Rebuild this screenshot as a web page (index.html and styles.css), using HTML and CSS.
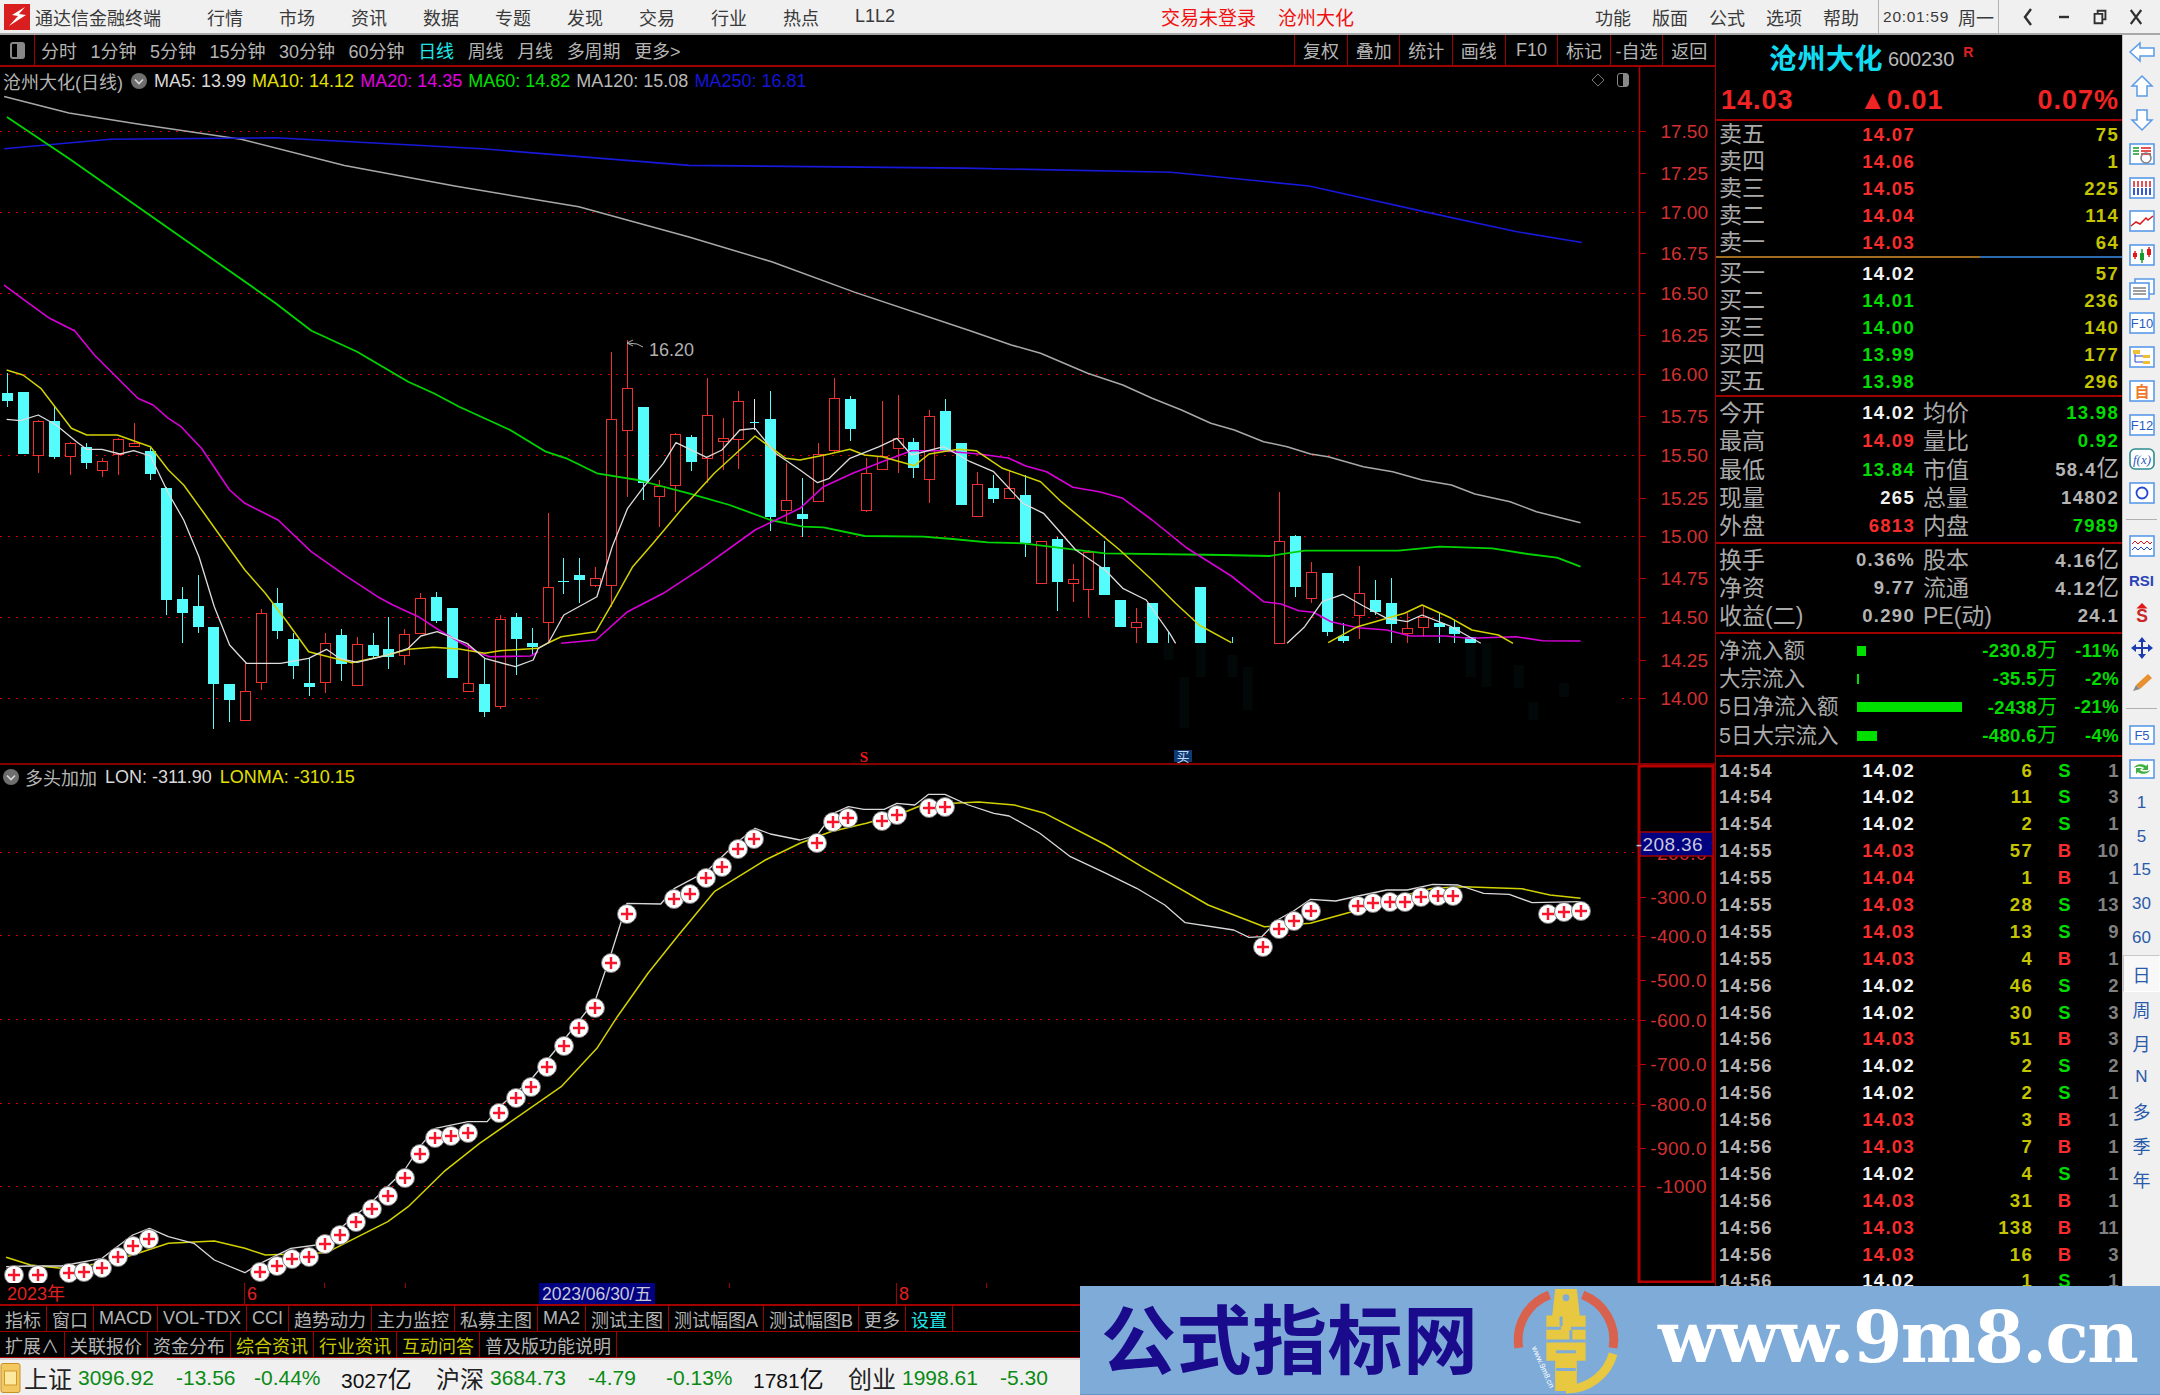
FILE: index.html
```html
<!DOCTYPE html>
<html lang="zh-CN">
<head>
<meta charset="utf-8">
<title>通达信金融终端</title>
<link rel="stylesheet" href="styles.css">
</head>
<body>
<div class="app">
  <header class="titlebar">
    <div class="brand">
      <svg class="brand-logo" viewBox="0 0 26 26"><rect width="26" height="26" class="logo-bg"/><path class="logo-mark" d="M21 3 8 11l6 1-9 10 17-11-7-1z"/></svg>
      <span class="brand-name">通达信金融终端</span>
    </div>
    <nav class="menu">
      <span>行情</span><span>市场</span><span>资讯</span><span>数据</span><span>专题</span><span>发现</span><span>交易</span><span>行业</span><span>热点</span><span>L1L2</span>
    </nav>
    <div class="notice"><span>交易未登录</span><span>沧州大化</span></div>
    <nav class="menu menu-right"><span>功能</span><span>版面</span><span>公式</span><span>选项</span><span>帮助</span></nav>
    <div class="clock"><span class="clock-time">20:01:59</span><span>周一</span></div>
    <div class="winctl">
      <svg viewBox="0 0 14 20"><path class="ctl" d="M10 2 4 10l6 8"/></svg>
      <svg viewBox="0 0 14 20"><path class="ctl" d="M2 10h10"/></svg>
      <svg viewBox="0 0 18 20"><path class="ctl" d="M6 6V2h10v11h-4M2 6h10v12H2z"/></svg>
      <svg viewBox="0 0 16 20"><path class="ctl" d="m2 2 12 16M14 2 2 18"/></svg>
    </div>
  </header>

  <div class="workspace">
    <main class="left">
      <div class="toolbar">
        <div class="tool-toggle"><span class="toggle-box"></span></div>
        <div class="periods">
          <span>分时</span><span>1分钟</span><span>5分钟</span><span>15分钟</span><span>30分钟</span><span>60分钟</span><span class="cyan">日线</span><span>周线</span><span>月线</span><span>多周期</span><span>更多&gt;</span>
        </div>
        <div class="tool-btns">
          <span>复权</span><span>叠加</span><span>统计</span><span>画线</span><span>F10</span><span>标记</span><span>-自选</span><span>返回</span>
        </div>
      </div>

      <section class="plot plot-main">
        <svg id="main-plot" class="plot-svg" viewBox="0 67 1715 698"></svg>
        <div class="plot-info">
          <span>沧州大化(日线)</span>
          <svg class="drop" viewBox="0 0 16 16"><circle cx="8" cy="8" r="8"/><path d="m4 6.5 4 4 4-4"/></svg>
          <span class="white">MA5: 13.99</span>
          <span class="yellow">MA10: 14.12</span>
          <span class="magenta">MA20: 14.35</span>
          <span class="green">MA60: 14.82</span>
          <span class="silver">MA120: 15.08</span>
          <span class="blue">MA250: 16.81</span>
        </div>
        <div class="plot-corner">
          <svg viewBox="0 0 14 14"><path class="ctl-thin" d="M7 1l6 6-6 6-6-6z"/></svg>
          <span class="toggle-box small"></span>
        </div>
      </section>

      <section class="plot plot-sub">
        <svg id="sub-plot" class="plot-svg" viewBox="0 765 1715 518"></svg>
        <div class="plot-info sub-info">
          <svg class="drop" viewBox="0 0 16 16"><circle cx="8" cy="8" r="8"/><path d="m4 6.5 4 4 4-4"/></svg>
          <span>多头加加</span>
          <span class="white">LON: -311.90</span>
          <span class="yellow">LONMA: -310.15</span>
        </div>
      </section>

      <div class="timeaxis">
        <span class="t-year">2023年</span>
        <span class="t-mark t-six">6</span>
        <span class="t-date">2023/06/30/五</span>
        <span class="t-mark t-eight">8</span>
      </div>

      <div class="tabs">
        <span>指标</span><span>窗口</span><span>MACD</span><span>VOL-TDX</span><span>CCI</span><span>趋势动力</span><span>主力监控</span><span>私募主图</span><span>MA2</span><span>测试主图</span><span>测试幅图A</span><span>测试幅图B</span><span>更多</span><span class="cyan">设置</span>
      </div>
      <div class="tabs tabs-low">
        <span>扩展∧</span><span>关联报价</span><span>资金分布</span><span class="olive">综合资讯</span><span class="olive">行业资讯</span><span class="olive">互动问答</span><span>普及版功能说明</span>
      </div>
    </main>

    <aside class="panel">
      <div class="stock-name"><b>沧州大化</b><span class="code">600230</span><sup>R</sup></div>
      <div class="stock-price"><span>14.03</span><span>▲0.01</span><span>0.07%</span></div>

      <div class="book">
        <div class="b-row"><i>卖五</i><b class="r">14.07</b><b class="y">75</b></div>
        <div class="b-row"><i>卖四</i><b class="r">14.06</b><b class="y">1</b></div>
        <div class="b-row"><i>卖三</i><b class="r">14.05</b><b class="y">225</b></div>
        <div class="b-row"><i>卖二</i><b class="r">14.04</b><b class="y">114</b></div>
        <div class="b-row"><i>卖一</i><b class="r">14.03</b><b class="y">64</b></div>
      </div>
      <div class="book-split"></div>
      <div class="book book-buy">
        <div class="b-row"><i>买一</i><b class="w">14.02</b><b class="y">57</b></div>
        <div class="b-row"><i>买二</i><b class="g">14.01</b><b class="y">236</b></div>
        <div class="b-row"><i>买三</i><b class="g">14.00</b><b class="y">140</b></div>
        <div class="b-row"><i>买四</i><b class="g">13.99</b><b class="y">177</b></div>
        <div class="b-row"><i>买五</i><b class="g">13.98</b><b class="y">296</b></div>
      </div>

      <div class="quote">
        <div class="q-row"><i>今开</i><b class="w">14.02</b><i>均价</i><b class="g">13.98</b></div>
        <div class="q-row"><i>最高</i><b class="r">14.09</b><i>量比</i><b class="g">0.92</b></div>
        <div class="q-row"><i>最低</i><b class="g">13.84</b><i>市值</i><b class="a">58.4<em>亿</em></b></div>
        <div class="q-row"><i>现量</i><b class="w">265</b><i>总量</i><b class="a">14802</b></div>
        <div class="q-row"><i>外盘</i><b class="r">6813</b><i>内盘</i><b class="g">7989</b></div>
      </div>
      <div class="quote quote-fin">
        <div class="q-row"><i>换手</i><b class="a">0.36%</b><i>股本</i><b class="a">4.16<em>亿</em></b></div>
        <div class="q-row"><i>净资</i><b class="a">9.77</b><i>流通</i><b class="a">4.12<em>亿</em></b></div>
        <div class="q-row"><i>收益(二)</i><b class="a">0.290</b><i>PE(动)</i><b class="a">24.1</b></div>
      </div>

      <div class="flow">
        <div class="f-row"><i>净流入额</i><span class="bar" style="width:9px"></span><b>-230.8<em>万</em></b><b>-11%</b></div>
        <div class="f-row"><i>大宗流入</i><span class="bar" style="width:2px"></span><b>-35.5<em>万</em></b><b>-2%</b></div>
        <div class="f-row"><i>5日净流入额</i><span class="bar" style="width:105px"></span><b>-2438<em>万</em></b><b>-21%</b></div>
        <div class="f-row"><i>5日大宗流入</i><span class="bar" style="width:20px"></span><b>-480.6<em>万</em></b><b>-4%</b></div>
      </div>

      <div class="ticks">
        <div class="t-row"><b class="a">14:54</b><b class="w">14.02</b><b class="y">6</b><b class="g">S</b><b class="n">1</b></div>
        <div class="t-row"><b class="a">14:54</b><b class="w">14.02</b><b class="y">11</b><b class="g">S</b><b class="n">3</b></div>
        <div class="t-row"><b class="a">14:54</b><b class="w">14.02</b><b class="y">2</b><b class="g">S</b><b class="n">1</b></div>
        <div class="t-row"><b class="a">14:55</b><b class="r">14.03</b><b class="y">57</b><b class="r">B</b><b class="n">10</b></div>
        <div class="t-row"><b class="a">14:55</b><b class="r">14.04</b><b class="y">1</b><b class="r">B</b><b class="n">1</b></div>
        <div class="t-row"><b class="a">14:55</b><b class="r">14.03</b><b class="y">28</b><b class="g">S</b><b class="n">13</b></div>
        <div class="t-row"><b class="a">14:55</b><b class="r">14.03</b><b class="y">13</b><b class="g">S</b><b class="n">9</b></div>
        <div class="t-row"><b class="a">14:55</b><b class="r">14.03</b><b class="y">4</b><b class="r">B</b><b class="n">1</b></div>
        <div class="t-row"><b class="a">14:56</b><b class="w">14.02</b><b class="y">46</b><b class="g">S</b><b class="n">2</b></div>
        <div class="t-row"><b class="a">14:56</b><b class="w">14.02</b><b class="y">30</b><b class="g">S</b><b class="n">3</b></div>
        <div class="t-row"><b class="a">14:56</b><b class="r">14.03</b><b class="y">51</b><b class="r">B</b><b class="n">3</b></div>
        <div class="t-row"><b class="a">14:56</b><b class="w">14.02</b><b class="y">2</b><b class="g">S</b><b class="n">2</b></div>
        <div class="t-row"><b class="a">14:56</b><b class="w">14.02</b><b class="y">2</b><b class="g">S</b><b class="n">1</b></div>
        <div class="t-row"><b class="a">14:56</b><b class="r">14.03</b><b class="y">3</b><b class="r">B</b><b class="n">1</b></div>
        <div class="t-row"><b class="a">14:56</b><b class="r">14.03</b><b class="y">7</b><b class="r">B</b><b class="n">1</b></div>
        <div class="t-row"><b class="a">14:56</b><b class="w">14.02</b><b class="y">4</b><b class="g">S</b><b class="n">1</b></div>
        <div class="t-row"><b class="a">14:56</b><b class="r">14.03</b><b class="y">31</b><b class="r">B</b><b class="n">1</b></div>
        <div class="t-row"><b class="a">14:56</b><b class="r">14.03</b><b class="y">138</b><b class="r">B</b><b class="n">11</b></div>
        <div class="t-row"><b class="a">14:56</b><b class="r">14.03</b><b class="y">16</b><b class="r">B</b><b class="n">3</b></div>
        <div class="t-row"><b class="a">14:56</b><b class="w">14.02</b><b class="y">1</b><b class="g">S</b><b class="n">1</b></div>
      </div>
    </aside>

    <aside class="side">
      <div class="s-item"><svg viewBox="0 0 26 22"><path class="arrow" d="M1 11 11 2v5h14v8H11v5z"/></svg></div>
      <div class="s-item"><svg viewBox="0 0 26 22"><path class="arrow" d="M13 1l10 10h-5v10H8V11H3z"/></svg></div>
      <div class="s-item"><svg viewBox="0 0 26 22"><path class="arrow" d="M8 1h10v10h5L13 21 3 11h5z"/></svg></div>
      <div class="s-item"><svg viewBox="0 0 26 22"><rect class="ib" x="1" y="1" width="24" height="20"/><path class="st-g" d="M4 5h6M4 8h6M4 11h6"/><path class="st-r" d="M12 5h10M12 8h10M12 11h10"/><circle class="st-s" cx="17" cy="15" r="5"/></svg></div>
      <div class="s-item"><svg viewBox="0 0 26 22"><rect class="ib" x="1" y="1" width="24" height="20"/><path class="st-r" d="M5 4v6M9 4v6M13 4v6M17 4v6M21 4v6"/><path class="st-b" d="M5 11v7M9 11v7M13 11v7M17 11v7M21 11v7"/></svg></div>
      <div class="s-item"><svg viewBox="0 0 26 22"><rect class="ib" x="1" y="1" width="24" height="20"/><path class="st-r" d="m2 16 5-4 4 2 6-6 2 2 5-4"/></svg></div>
      <div class="s-item"><svg viewBox="0 0 26 22"><rect class="ib" x="1" y="1" width="24" height="20"/><path class="st-r" d="M6 7v8M20 3v10"/><path class="st-g" d="M13 5v14"/><rect class="fl-r" x="4" y="9" width="4" height="4"/><rect class="fl-g" x="11" y="9" width="4" height="7"/><rect class="fl-r" x="18" y="5" width="4" height="6"/></svg></div>
      <div class="s-item"><svg viewBox="0 0 26 22"><path class="ib" d="M6 1h19v15H6z"/><rect class="ib" x="1" y="5" width="19" height="16"/><path class="st-s" d="M4 10h13M4 13h13M4 16h13"/></svg></div>
      <div class="s-item"><svg viewBox="0 0 26 22"><rect class="ib" x="1" y="1" width="24" height="20"/><text class="ib-text" x="13" y="16">F10</text></svg></div>
      <div class="s-item"><svg viewBox="0 0 26 22"><rect class="ib" x="1" y="1" width="24" height="20"/><rect class="fl-y" x="4" y="4" width="7" height="4"/><rect class="fl-y" x="14" y="9" width="7" height="3"/><rect class="fl-y" x="14" y="15" width="7" height="3"/><path class="st-b-thin" d="M6 8v8h8M6 10h8"/></svg></div>
      <div class="s-item"><svg viewBox="0 0 26 22"><rect class="ib" x="1" y="1" width="24" height="20"/><text class="ib-zi" x="13" y="17">自</text></svg></div>
      <div class="s-item"><svg viewBox="0 0 26 22"><rect class="ib" x="1" y="1" width="24" height="20"/><text class="ib-text" x="13" y="16">F12</text></svg></div>
      <div class="s-item"><svg viewBox="0 0 26 22"><rect class="ib ib-teal" x="1" y="1" width="24" height="20" rx="5"/><text class="ib-fx" x="13" y="16">f(x)</text></svg></div>
      <div class="s-item"><svg viewBox="0 0 26 22"><rect class="ib" x="1" y="1" width="24" height="20"/><circle class="st-b" cx="13" cy="11" r="5.5"/></svg></div>
      <div class="s-sep s-sep-a"></div>
      <div class="s-item"><svg viewBox="0 0 26 22"><rect class="ib" x="1" y="1" width="24" height="20"/><path class="st-r-thin" d="m3 9 3-3 3 3 3-3 3 3 3-3 3 3 2-2"/><path class="st-b-thin" d="m3 15 3-3 3 3 3-3 3 3 3-3 3 3 2-2"/></svg></div>
      <div class="s-item"><span class="rsi">RSI</span></div>
      <div class="s-item"><svg viewBox="0 0 26 26"><path class="fl-r" d="m13 1 6 6H7z"/><text class="ib-dollar" x="13" y="22">S</text></svg></div>
      <div class="s-item"><svg viewBox="0 0 26 24"><path class="fl-b" d="m13 1 4 5h-3v5h5V8l5 4-5 4v-3h-5v5h3l-4 5-4-5h3v-5H7v3l-5-4 5-4v3h5V6H9z"/></svg></div>
      <div class="s-item"><svg viewBox="0 0 26 24"><path class="fl-o" d="M7 15 19 4l4 4-12 11z"/><path class="fl-g2" d="M7 15l4 4-7 2z"/></svg></div>
      <div class="s-sep s-sep-b"></div>
      <div class="s-item"><svg viewBox="0 0 26 22"><rect class="ib" x="1" y="2" width="24" height="18"/><text class="ib-text" x="13" y="16">F5</text></svg></div>
      <div class="s-item"><svg viewBox="0 0 26 22"><rect class="ib" x="1" y="2" width="24" height="18"/><path class="fl-rf" d="M5 10c1-4 9-5 12-2l2-2v6h-6l2-2c-2-2-7-2-10 0zM21 12c-1 4-9 5-12 2l-2 2v-6h6l-2 2c2 2 7 2 10 0z"/></svg></div>
      <div class="s-item s-num">1</div>
      <div class="s-item s-num">5</div>
      <div class="s-item s-num">15</div>
      <div class="s-item s-num">30</div>
      <div class="s-item s-num">60</div>
      <div class="s-item s-day s-on">日</div>
      <div class="s-item s-day">周</div>
      <div class="s-item s-day">月</div>
      <div class="s-item s-num">N</div>
      <div class="s-item s-day">多</div>
      <div class="s-item s-day">季</div>
      <div class="s-item s-day">年</div>
    </aside>
  </div>

  <footer class="status">
    <svg class="st-icon" viewBox="0 0 20 30"><rect class="gold-o" x="0.5" y="0.5" width="19" height="29" rx="2"/><rect class="gold-i" x="4" y="8" width="12" height="14"/></svg>
    <span class="s-name">上证</span><span class="s-val">3096.92</span><span class="s-chg">-13.56</span><span class="s-pct">-0.44%</span><span class="s-amt">3027<em>亿</em></span>
    <span class="s-name">沪深</span><span class="s-val">3684.73</span><span class="s-chg">-4.79</span><span class="s-pct">-0.13%</span><span class="s-amt">1781<em>亿</em></span>
    <span class="s-name">创业</span><span class="s-val">1998.61</span><span class="s-chg">-5.30</span>
  </footer>

  <div class="watermark">
    <span class="wm-cn">公式指标网</span>
    <svg class="wm-logo" viewBox="0 0 110 110">
      <path class="wm-red" d="M7 62A49 49 0 0 1 38 8"/><path class="wm-red" d="M72 8A49 49 0 0 1 103 62"/>
      <path class="wm-yel" d="M103 68A49 49 0 0 1 55 104"/>
      <path class="wm-fig" d="M44 2h22l3 27h6v46h-9v31H44V75h-9V29h6z"/>
      <circle class="wm-hole" cx="55" cy="11" r="3.5"/>
      <path class="wm-gap" d="M35 42h15M60 42h15M35 55h40M45 66h20M45 84h20M50 30v10M60 44v10"/>
      <text class="wm-url" x="20" y="62" transform="rotate(66 20 62)">www.9m8.cn</text>
    </svg>
    <span class="wm-en">www.9m8.cn</span>
  </div>
</div>
<script src="chart.js"></script>
</body>
</html>
```
FILE: styles.css
```css
*{box-sizing:border-box}
html,body{margin:0;padding:0;background:#000}
body{width:2160px;height:1395px;overflow:hidden;font-family:"Liberation Sans","Noto Sans CJK SC",sans-serif}
i,em{font-style:normal}
.app{position:relative;display:flex;flex-direction:column;width:2160px;height:1395px}

/* title bar */
.titlebar{display:flex;align-items:center;height:35px;background:#f0f0f0;border-bottom:2px solid #a8a8a8;color:#3a3a3a;font-size:18px;flex:none}
.brand{display:flex;align-items:center;width:207px;padding-left:4px}
.brand-logo{width:26px;height:26px;margin-right:5px}
.logo-bg{fill:#d81e1e}
.logo-mark{fill:#fff}
.brand-name{white-space:nowrap}
.menu{display:flex;align-items:center;gap:36px;white-space:nowrap}
.menu span{display:flex;align-items:center;height:24px}
.notice{display:flex;gap:22px;margin-left:266px;color:#f01010;font-size:19px;white-space:nowrap}
.menu-right{gap:21px;margin-left:241px}
.clock{display:flex;align-items:center;gap:9px;height:33px;margin-left:19px;padding:0 4px;border-left:1px solid #b4b4b4;border-right:1px solid #b4b4b4;white-space:nowrap}
.clock-time{font-size:15.5px;letter-spacing:.7px}
.winctl{display:flex;align-items:center;gap:22px;margin-left:22px}
.winctl svg{height:20px;width:14px;overflow:visible}
.ctl{fill:none;stroke:#303030;stroke-width:2.4}
.ctl-thin{fill:none;stroke:#777;stroke-width:1}

.workspace{display:flex;flex:none;height:1323px}
.left{display:flex;flex-direction:column;width:1715px;flex:none;color:#b4b4b4;font-size:18px}

/* chart toolbar */
.toolbar{display:flex;align-items:center;height:32px;flex:none;border-bottom:2px solid #a00000}
.tool-toggle{display:flex;align-items:center;justify-content:center;width:35px;height:100%;border-right:1px solid #a00000}
.toggle-box{display:block;width:15px;height:17px;border:2px solid #888;border-radius:3px;background:linear-gradient(90deg,#000 50%,#888 50%)}
.toggle-box.small{width:12px;height:14px;border-width:1px}
.periods{display:flex;gap:13.5px;padding-left:6px;white-space:nowrap}
.cyan{color:#1fe8ea}
.tool-btns{display:flex;margin-left:auto;height:100%;white-space:nowrap}
.tool-btns span{display:flex;align-items:center;justify-content:center;width:52.6px;border-left:1px solid #a00000}

/* plots */
.plot{position:relative;flex:none}
.plot-main{height:698px}
.plot-sub{height:518px}
.plot-svg{display:block;width:1715px;height:100%}
.plot-info{position:absolute;left:3px;top:2px;display:flex;align-items:center;gap:6px;height:24px;white-space:nowrap}
.sub-info{top:0;gap:8px}
.drop{flex:none;width:16px;height:16px;margin:0 1px 0 2px}
.drop circle{fill:#6e6e6e}
.drop path{fill:none;stroke:#d8d8d8;stroke-width:1.6}
.sub-info .drop{margin:0 -2px 0 0}
.white{color:#d8d8d8}.yellow{color:#e0e000}.magenta{color:#e000e0}.green{color:#00e000}.silver{color:#b8b8b8}.blue{color:#1414d8}
.plot-corner{position:absolute;right:86px;top:6px;display:flex;align-items:center;gap:12px}
.plot-corner svg{width:14px;height:14px}

.grid{stroke:#c80000;stroke-width:1;stroke-dasharray:2 6}
.axis{stroke:#b40000;stroke-width:1.5;fill:none}
.axis-box{stroke:#b40000;stroke-width:3;fill:none}
.tick{stroke:#b40000;stroke-width:1}
.lbl{fill:#d23030;font-size:19px;text-anchor:end;font-family:"Liberation Sans",sans-serif}
.lbl-sub{fill:#d23030;font-size:19px;text-anchor:end;letter-spacing:.5px}
.cur-box{fill:#000080;stroke:#a00000;stroke-width:1.5}
.cur-lbl{fill:#c8c8d8;font-size:19px;text-anchor:end;letter-spacing:.4px}
.wick-c{stroke:#55fcfc;stroke-width:1}
.wick-r{stroke:#f03030;stroke-width:1}
.wick-w{stroke:#e8e8e8;stroke-width:1}
.body-c{fill:#55fcfc}
.body-r{fill:#000;stroke:#f03030;stroke-width:1}
.ghost{fill:#020707}
.ln{fill:none;stroke-linejoin:round}
.ma5{stroke:#dcdcdc;stroke-width:1.3}
.ma10{stroke:#d2d200;stroke-width:1.5}
.ma20{stroke:#d800d8;stroke-width:1.6}
.ma60{stroke:#00d400;stroke-width:1.8}
.ma120{stroke:#a8a8a8;stroke-width:1.5}
.ma250{stroke:#1818d8;stroke-width:1.6}
.lon{stroke:#d8d8d8;stroke-width:1.3}
.lonma{stroke:#d2d200;stroke-width:1.5}
.mk-o{fill:#fff;stroke:#777;stroke-width:1}
.mk-p{stroke:#f8142a;stroke-width:2.4}
.anno{fill:#b0b0b0;font-size:18px}
.anno-a{fill:none;stroke:#b0b0b0;stroke-width:1}
.sig-s{fill:#e81818;font-size:15px;font-weight:700;text-anchor:middle;font-family:"Liberation Serif",serif}
.sig-bg{fill:#0c3a74}
.sig-t{fill:#c8d8f0;font-size:13px;text-anchor:middle}

/* time axis + tabs */
.timeaxis{position:relative;height:23px;flex:none;border-bottom:2px solid #a00000;color:#e02020;font-size:18px;line-height:22px;background-image:linear-gradient(#a00000,#a00000),linear-gradient(#a00000,#a00000),linear-gradient(#a00000,#a00000),linear-gradient(#a00000,#a00000);background-repeat:no-repeat;background-size:1px 5px;background-position:324px 0,405px 0,729px 0,986px 0}
.t-year{position:absolute;left:7px}
.t-mark{position:absolute;padding-left:2px;border-left:1px solid #a00000}
.t-six{left:244px}
.t-eight{left:896px}
.t-date{position:absolute;left:539px;width:116px;height:21px;background:#000080;color:#c8c8d8;text-align:center;font-size:17.5px;white-space:nowrap}
.tabs{display:flex;height:26px;flex:none;border-bottom:1px solid #a00000;white-space:nowrap;font-size:18px}
.tabs span{display:flex;align-items:center;padding:0 5px;border-right:1px solid #a00000}
.tabs-low{height:27px;border-bottom:2px solid #a00000}
.olive{color:#c8c800}

/* quote panel */
.panel{width:407px;flex:none;height:1323px;overflow:hidden;border-left:1px solid #a00000;color:#aaa;font-size:23px;background:#000}
.panel b{font-size:18.5px;font-weight:700;letter-spacing:1.3px;text-align:right;white-space:nowrap}
.panel i{white-space:nowrap;font-size:23px}
.panel em{font-size:22.5px;font-weight:400;letter-spacing:0}
.stock-name{display:flex;align-items:center;height:43px;padding-left:53px;white-space:nowrap}
.panel .stock-name b{color:#12dcf2;font-size:28px;letter-spacing:.5px}
.code{margin-left:5px;color:#b8b8b8;font-size:20px;letter-spacing:-.1px;margin-top:6px}
.stock-name sup{margin:-10px 0 0 9px;color:#e02020;font-size:14px;font-weight:700}
.stock-price{display:flex;justify-content:space-between;align-items:center;height:42.5px;padding:4px 3px 0 5px;border-bottom:2px solid #a00000;color:#f02424;font-size:27px;font-weight:700;letter-spacing:1px;white-space:nowrap}
.stock-price span:nth-child(2){margin-right:28px}
.book{padding:0 3px}
.book-buy{height:139px;padding-top:2.5px;border-bottom:2px solid #a00000}
.book-split{height:2px;background:linear-gradient(90deg,#a06c20 65%,#2c6cae 65%)}
.b-row{display:grid;grid-template-columns:100px 96px 1fr;height:27px;line-height:27px;align-items:center}
.r{color:#f82c2c}.g{color:#00dc00}.w{color:#f0f0f0}.y{color:#c4c400}.a{color:#b4b4b4}.n{color:#808080}
.quote{padding:2px 3px 0;height:147px;border-bottom:2px solid #a00000}
.quote-fin{height:90.5px}
.q-row{display:grid;grid-template-columns:70px 126px 8px 70px 126px;height:28.3px;line-height:28px;align-items:center}
.q-row i:nth-of-type(2){grid-column:4}
.flow{padding:2px 3px 0;height:122.5px;border-bottom:2px solid #a00000}
.f-row{display:grid;grid-template-columns:138px 110px 90px 62px;height:28.4px;line-height:28px;align-items:center}
.panel .f-row i{font-size:21.5px}
.panel .f-row b{color:#00dc00;font-size:18.5px;letter-spacing:.4px}
.panel .f-row em{font-size:20px}
.bar{display:block;height:10px;background:#00e000}
.ticks{padding:0 3px}
.t-row{display:grid;grid-template-columns:60px 136px 118px 64px 22px;height:26.9px;line-height:27px}
.panel .t-row b:first-child{text-align:left;letter-spacing:1.3px}
.panel .t-row b:nth-child(4){text-align:center}
.panel .t-row b:last-child{letter-spacing:.5px}

/* right tool strip */
.side{width:38px;flex:none;height:1323px;background:#f0f0f0;border-left:1px solid #c4c4c4;overflow:hidden;color:#2a5aaa}
.s-item{display:flex;align-items:center;justify-content:center;height:33.9px}
.s-item svg{width:26px;height:24px}
.s-sep{display:flex;align-items:center;margin:0 3px}
.s-sep::after{content:"";display:block;width:100%;height:1px;background:#b0b0b0}
.s-sep-a{height:20px}
.s-sep-b{height:19px}
.s-num{font-size:17px}
.s-day{font-size:18px;font-family:"Noto Sans CJK SC",sans-serif}
.s-on{height:37px;background:#f8f8f8;border:1px solid #c8c8c8;border-right-color:#fff;border-bottom-color:#fff}
.arrow{fill:#fff;stroke:#5a9ae8;stroke-width:1.5}
.ib{fill:#fff;stroke:#5a9ae8;stroke-width:1.6}
.ib-teal{stroke:#2c8c90}
.ib-text{fill:#2a5cc0;font-size:13px;text-anchor:middle}
.ib-zi{fill:#f07828;font-size:15px;font-weight:700;text-anchor:middle}
.ib-fx{fill:#2a5cc0;font-size:13px;font-style:italic;text-anchor:middle;font-family:"Liberation Serif",serif}
.ib-dollar{fill:#c82828;font-size:19px;font-weight:700;text-anchor:middle}
.st-g,.st-r,.st-b,.st-s,.st-b-thin,.st-r-thin{fill:none}
.st-g{stroke:#1a9a2a;stroke-width:1.5}
.st-r{stroke:#e01818;stroke-width:1.5}
.st-b{stroke:#2248d0;stroke-width:1.8}
.st-s{stroke:#808080;stroke-width:1.5}
.st-b-thin{stroke:#2248d0;stroke-width:1}
.st-r-thin{stroke:#e01818;stroke-width:1}
.fl-r{fill:#e01818}.fl-g{fill:#1a9a2a}.fl-y{fill:#f0c030}.fl-b{fill:#1c3cb0}.fl-o{fill:#e89030}.fl-g2{fill:#888}.fl-rf{fill:#40b040}
.rsi{color:#2a44b8;font-size:15px;font-weight:700}

/* status bar */
.status{display:flex;align-items:center;height:37px;flex:none;background:#f0f0f0;color:#222;white-space:nowrap;border-top:2px solid #d8d8d8}
.st-icon{width:21px;height:30px;margin-right:3px;flex:none}
.gold-o{fill:#f4c860;stroke:#c89020}
.gold-i{fill:#fde8a0;stroke:#d09828}
.status span{display:block;flex:none}
.status em{font-size:24px}
.s-name{width:54px;font-size:24px}
.s-val,.s-chg,.s-pct{color:#0a8a14;font-size:21px}
.s-val{width:98px}
.s-chg{width:78px}
.s-pct{width:87px}
.s-amt{width:95px;font-size:21px;color:#111}

/* site watermark overlay */
.watermark{position:absolute;left:1080px;top:1286px;width:1080px;height:109px;background:#7eabd8;border-bottom:1px solid #6a95c4}
.wm-cn{position:absolute;left:21px;top:-4px;color:#1a0a8c;font-size:75px;font-weight:700;letter-spacing:.5px;line-height:108px;white-space:nowrap;font-family:"Noto Sans CJK SC",sans-serif}
.wm-logo{position:absolute;left:431px;top:1px;width:110px;height:108px}
.wm-red{fill:none;stroke:#d8624e;stroke-width:9}
.wm-yel{fill:none;stroke:#e8c840;stroke-width:9}
.wm-fig{fill:#e8c840}
.wm-hole{fill:#7eabd8}
.wm-gap{stroke:#7eabd8;stroke-width:3;fill:none}
.wm-url{fill:#fff;font-size:8px}
.wm-en{position:absolute;left:578px;top:-3px;color:#fff;font-size:71px;font-weight:700;line-height:108px;letter-spacing:-1.5px;white-space:nowrap;font-family:"DejaVu Serif",serif}
```
FILE: chart.js
```js
(function () {
  var NS = "http://www.w3.org/2000/svg";
  function el(parent, tag, attrs, text) {
    var n = document.createElementNS(NS, tag);
    for (var k in attrs) n.setAttribute(k, attrs[k]);
    if (text !== undefined) n.textContent = text;
    parent.appendChild(n);
    return n;
  }
  var main = document.getElementById("main-plot");
  var sub = document.getElementById("sub-plot");

  /* scale helpers: measured traces, converted to page pixels */
  function ptsA(a) { var o = []; for (var i = 0; i < a.length; i += 2) o.push([a[i] / 1.96, 330 + a[i + 1] / 3]); return o; }
  function ptsB(a) { var o = []; for (var i = 0; i < a.length; i += 2) o.push([800 + a[i] / 1.704, 330 + a[i + 1] / 3]); return o; }
  function ptsT(a) { var o = []; for (var i = 0; i < a.length; i += 2) o.push([a[i] * 1.378, a[i + 1] * 1.378]); return o; }
  function subA(a) { var o = []; for (var i = 0; i < a.length; i += 2) o.push([a[i] / 1.96, 760 + a[i + 1] / 3]); return o; }
  function subB(a) { var o = []; for (var i = 0; i < a.length; i += 2) o.push([800 + a[i] / 1.96, 760 + a[i + 1] / 3]); return o; }
  function line(svg, pts, cls) {
    el(svg, "polyline", { "class": "ln " + cls, points: pts.map(function (p) { return p[0].toFixed(1) + "," + p[1].toFixed(1); }).join(" ") });
  }

  /* main grid */
  [131, 212, 293, 374, 455, 536, 617].forEach(function (y) {
    el(main, "line", { "class": "grid", x1: 0, x2: 1639, y1: y + .5, y2: y + .5 });
  });
  el(main, "line", { "class": "grid", x1: 0, x2: 537, y1: 698.5, y2: 698.5 });
  el(main, "line", { "class": "grid", x1: 1622, x2: 1639, y1: 698.5, y2: 698.5 });

  /* candles: high, body top, body bottom, low, colour */
  var C = [
    [130,190,212,230,"c"],[185,185,372,372,"c"],[270,272,376,428,"r"],[230,272,382,388,"c"],[335,340,378,436,"r"],
    [340,352,400,418,"c"],[385,394,421,440,"r"],[325,326,372,436,"r"],[280,338,347,350,"r"],[355,362,432,450,"c"],
    [470,474,810,856,"c"],[770,806,850,940,"c"],[735,828,890,910,"c"],[892,892,1062,1197,"c"],[1063,1063,1110,1175,"c"],
    [1000,1082,1170,1170,"r"],[838,848,1056,1080,"r"],[775,820,904,928,"c"],[910,928,1008,1048,"c"],[985,1060,1072,1098,"c"],
    [910,938,1056,1090,"r"],[897,914,1003,1053,"c"],[920,943,1065,1065,"r"],[910,946,977,985,"c"],[860,956,980,1018,"c"],
    [897,912,975,1005,"r"],[788,803,908,910,"r"],[785,802,873,880,"c"],[833,833,1044,1044,"c"],[938,1060,1083,1083,"r"],
    [985,1063,1147,1162,"c"],[856,866,1128,1138,"r"],[850,860,927,1035,"c"],[895,938,952,975,"c"],[550,772,876,940,"r"],
    [685,752,757,793,"c"],[685,735,751,820,"c"],[712,745,764,770,"r"],[65,268,764,830,"r"],[30,173,300,500,"r"],
    [230,230,460,510,"c"],[450,467,498,590,"r"],[308,313,466,545,"r"],[315,320,396,422,"c"],[145,255,385,460,"r"],
    [265,325,332,420,"r"],[182,214,326,418,"r"],[208,275,278,300,"w"],[182,267,562,603,"c"],[400,510,540,575,"r"],
    [445,553,567,620,"c"],[338,372,513,513,"r"],[145,205,360,365,"r"],[198,207,297,333,"c"],[385,430,540,545,"r"],
    [212,378,418,418,"r"],[195,325,355,428,"r"],[325,335,413,445,"c"],[240,258,448,518,"r"],[208,244,362,362,"c"],
    [338,338,526,526,"c"],[425,461,557,557,"r"],[435,473,508,518,"c"],[420,475,503,503,"r"],[435,496,640,680,"c"],
    [632,632,760,760,"r"],[622,628,756,842,"c"],[703,748,760,815,"r"],[660,665,778,862,"r"],[632,712,796,796,"c"],
    [810,810,891,891,"c"],[833,875,890,940,"r"],[820,820,940,940,"c"],[905,940,940,940,"c"],null,
    [770,770,940,940,"c"],null,[922,940,940,940,"c"],null,null,
    [487,632,940,940,"r"],[614,618,770,800,"c"],[697,727,805,818,"r"],[730,730,905,918,"c"],[880,918,932,940,"c"],
    [707,790,855,928,"r"],[750,810,845,855,"c"],[743,820,882,940,"c"],[850,893,908,940,"r"],[825,862,890,920,"r"],
    [850,878,890,940,"c"],[870,892,912,940,"c"],[920,920,940,940,"c"]
  ];
  function Y(d) { return Math.round(330 + d / 3); }
  [[628,940,990],[655,1040,1195],[683,940,1040],[737,975,1040],[763,1010,1140],[1143,940,1040],[1170,940,1070],[1225,1005,1075],[1250,1115,1170],[1302,1060,1100]].forEach(function (g) {
    el(main, "rect", { "class": "ghost", x: 800 + g[0] / 1.704 - 5, y: Y(g[1]), width: 10, height: Y(g[2]) - Y(g[1]) });
  });
  C.forEach(function (c, i) {
    if (!c) return;
    var x = Math.round(6.6 + 15.91 * i), col = c[4];
    el(main, "line", { "class": "wick-" + col, x1: x + .5, x2: x + .5, y1: Y(c[0]), y2: Y(c[3]) });
    var top = Y(c[1]), bot = Y(c[2]);
    if (bot <= top) return;
    if (col === "c") el(main, "rect", { "class": "body-c", x: x - 5, y: top, width: 11, height: bot - top });
    else if (col === "w") el(main, "rect", { "class": "body-c", x: x - 4, y: top, width: 9, height: 1 });
    else el(main, "rect", { "class": "body-r", x: x - 4.5, y: top + .5, width: 10, height: bot - top });
  });

  /* moving averages */
  line(main, ptsT([3,70,50,82,100,90,175,101,250,120,330,135,420,150,500,172,560,190,620,212,704,240]).concat(
    ptsB([360,45,410,70,490,130,550,165,600,205,650,240,700,280,740,300,790,335,830,350,870,372,900,380,960,410,1010,425,1060,450,1110,465,1150,492,1210,515,1255,545,1330,578])), "ma120");
  line(main, ptsT([3,108,80,101,200,100,350,108,500,120,700,122,850,125,950,135,1040,155,1100,168,1148,176]), "ma250");
  line(main, ptsT([5,85,50,115,100,150,150,185,200,220,226,240]).concat(
    ptsA([700,65,800,155,850,190,900,230,1000,300,1070,365,1110,385,1170,430,1250,450,1350,490,1430,525,1510,570]),
    ptsB([5,590,40,592,110,618,210,620,260,627,320,637,380,640,450,655,520,670,720,675,800,678,860,662,1020,662,1090,650,1180,655,1240,672,1290,683,1330,710])), "ma60");
  line(main, ptsT([3,207,18,218,36,231,54,240]).concat(
    ptsA([145,0,185,75,270,205,300,225,330,265,355,290,395,355,450,480,480,520,545,570,610,665,680,740,740,800,770,825,820,860,860,900,900,935,940,970,960,980,1040,978,1055,965])), "ma20");
  line(main, ptsA([1100,940,1168,930,1230,845,1300,790,1380,710,1480,600,1568,535]).concat(
    ptsB([40,470,90,430,140,395,190,362,240,362,305,372,355,384,385,408,420,425,465,472,510,485,550,505,600,570,660,655,735,738,790,815,820,822,850,842,875,847,905,875,950,893,1000,900,1040,918,1100,918,1140,925,1220,920,1265,932,1330,933])), "ma20");
  line(main, ptsA([13,120,45,135,80,175,110,235,140,295,170,315,230,315,295,350,330,420,360,465,400,550,435,625,480,720,520,790,560,870,605,965,690,998,760,975,800,958,850,952,900,957,950,970,980,962,1055,955,1075,938,1100,920,1168,905,1200,820,1240,710,1280,640,1340,530,1400,430,1480,318,1540,385]).concat(
    ptsB([0,390,50,372,85,358,110,375,140,380,195,407,220,372,270,358,300,362,345,415,410,455,445,515,490,580,545,660,600,750,640,820,680,885,735,938])), "ma10");
  line(main, ptsB([900,938,950,890,1030,850,1060,825,1110,865,1145,900,1190,915,1215,940]), "ma10");
  line(main, ptsA([13,268,40,272,75,255,110,285,150,335,170,358,200,358,235,372,262,362,295,378,330,490,360,570,390,680,420,830,450,945,483,1000,550,1000,605,985,640,958,665,985,700,997,760,975,800,955,825,918,857,905,915,940,950,985,1010,1010,1045,990,1055,955,1075,938,1105,855,1170,800,1200,650,1230,535,1262,470,1300,400,1325,338,1385,382,1415,360,1450,300,1480,295,1520,370]).concat(
    ptsB([0,420,30,458,50,445,85,385,135,350,165,325,190,375,245,350,290,395,330,425,380,520,415,550,470,660,520,720,550,775,590,810,630,910,640,940])), "ma5");
  line(main, ptsB([830,940,860,890,890,815,925,793,960,828,1000,865,1035,875,1060,855,1110,890,1160,940]), "ma5");

  /* high annotation */
  el(main, "path", { "class": "anno-a", d: "M633 340l-6 3 6 3M627 343l10 1 6 3" });
  el(main, "text", { "class": "anno", x: 649, y: 356 }, "16.20");

  /* signal markers */
  el(main, "text", { "class": "sig-s", x: 864, y: 762 }, "S");
  el(main, "rect", { "class": "sig-bg", x: 1174, y: 750, width: 18, height: 12 });
  el(main, "text", { "class": "sig-t", x: 1183, y: 761 }, "买");

  /* price axis */
  el(main, "line", { "class": "axis", x1: 1639.5, x2: 1639.5, y1: 67, y2: 764 });
  el(main, "line", { "class": "axis", x1: 0, x2: 1715, y1: 764, y2: 764 });
  [[17.5,131],[17.25,173],[17,212],[16.75,253],[16.5,293],[16.25,335],[16,374],[15.75,416],[15.5,455],[15.25,498],[15,536],[14.75,578],[14.5,617],[14.25,660],[14,698]].forEach(function (t) {
    el(main, "line", { "class": "tick", x1: 1640, x2: 1646, y1: t[1] + .5, y2: t[1] + .5 });
    el(main, "text", { "class": "lbl", x: 1708, y: t[1] + 7 }, t[0].toFixed(2));
  });

  /* sub chart */
  [852.5, 935.5, 1019.5, 1103.5, 1186.5].forEach(function (y) {
    el(sub, "line", { "class": "grid", x1: 0, x2: 1639, y1: y, y2: y });
  });
  var lon = subA([12,1520,60,1518,120,1518,200,1495,260,1425,293,1405,330,1430,380,1450,420,1500,480,1538,510,1510,570,1465,620,1455,667,1405,729,1325,793,1230,823,1160,853,1105,917,1085,955,1085,979,1040,1040,960,1105,840,1167,720,1197,585,1229,430,1295,432,1322,385,1384,335,1446,245,1480,205,1510,222,1568,240]).concat(
    subB([34,225,65,160,95,140,125,148,165,148,190,130,225,135,252,103,284,103,330,135,380,160,410,168,470,220,530,290,600,340,660,385,715,435,755,488,850,510,880,532,905,530,938,478,968,452,1001,418,1050,423,1094,408,1150,390,1190,390,1240,373,1290,375,1340,400,1390,403,1435,428,1530,425]));
  var lonma = subA([12,1492,60,1515,120,1525,200,1510,260,1485,330,1450,420,1443,480,1465,520,1485,640,1478,760,1385,800,1340,870,1235,940,1150,1100,980,1170,865,1210,770,1270,640,1330,525,1400,395,1500,300,1568,250]).concat(
    subB([60,215,130,190,200,160,240,135,300,130,350,126,420,135,480,160,600,255,670,320,800,435,910,500,1000,490,1094,450,1150,420,1240,385,1300,380,1415,386,1470,405,1530,415]));
  line(sub, lonma, "lonma");
  line(sub, lon, "lon");
  var marks = subA([28,1545,75,1545,135,1540,165,1535,200,1523,232,1490,261,1457,293,1438,510,1535,543,1517,572,1497,605,1490,637,1452,667,1425,698,1385,729,1348,761,1308,793,1253,823,1183,853,1135,884,1127,917,1120,979,1060,1011,1015,1040,980,1073,920,1105,858,1134,803,1167,745,1197,610,1229,462,1322,417,1352,403,1384,355,1416,322,1446,267,1478,237]).concat(
    subB([34,250,65,187,95,175,160,183,190,165,252,143,284,142,907,561,938,507,968,484,1001,453,1094,438,1124,430,1156,427,1185,426,1218,412,1250,408,1280,408,1467,462,1497,457,1530,452]));
  marks.forEach(function (p) {
    var x = Math.round(p[0]), y = Math.round(p[1]);
    el(sub, "circle", { "class": "mk-o", cx: x, cy: y, r: 9.5 });
    el(sub, "path", { "class": "mk-p", d: "M" + (x - 6) + " " + y + "h12M" + x + " " + (y - 6) + "v12" });
  });
  el(sub, "rect", { "class": "axis-box", x: 1639, y: 766, width: 74, height: 516 });
  [["-200.0",853],["-300.0",897],["-400.0",936],["-500.0",980],["-600.0",1020],["-700.0",1064],["-800.0",1104],["-900.0",1148],["-1000",1186]].forEach(function (t) {
    el(sub, "line", { "class": "tick", x1: 1640, x2: 1646, y1: t[1] + .5, y2: t[1] + .5 });
    el(sub, "text", { "class": "lbl-sub", x: 1707, y: t[1] + 7 }, t[0]);
  });
  el(sub, "rect", { "class": "cur-box", x: 1640, y: 832, width: 73, height: 24 });
  el(sub, "text", { "class": "cur-lbl", x: 1703, y: 851 }, "-208.36");
})();
```
